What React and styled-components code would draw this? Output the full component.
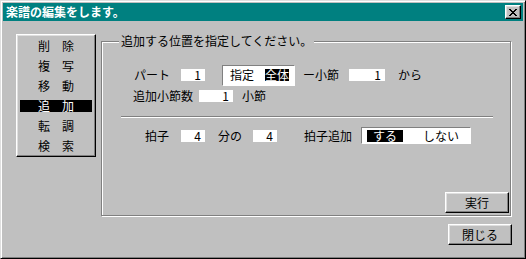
import React from "react"
import styled, { createGlobalStyle } from "styled-components"

const GlobalStyle = createGlobalStyle`
  html, body {
    margin: 0;
    padding: 0;
    background: #c0c0c0;
  }
`

const raised = `
  border: 1px solid;
  border-color: #fff #000 #000 #fff;
  box-shadow: inset -1px -1px 0 #808080, inset 1px 1px 0 #dfdfdf;
`

const StyledWindow = styled.div`
  width: 526px;
  height: 259px;
  box-sizing: border-box;
  background: #c0c0c0;
  border: 1px solid;
  border-color: #dfdfdf #000 #000 #dfdfdf;
  box-shadow: inset 1px 1px 0 #fff, inset -1px -1px 0 #808080;
  padding: 2px;
  display: flex;
  flex-direction: column;
  font-family: "Noto Sans CJK JP", "Noto Sans", sans-serif;
  font-size: 12px;
  color: #000;
`

const StyledTitleBar = styled.div`
  height: 18px;
  background: #008080;
  display: flex;
  align-items: center;
  justify-content: space-between;
  padding: 0 2px 0 3px;
  color: #fff;
  font-weight: bold;
  line-height: 12px;
`

const StyledCloseButton = styled.div`
  width: 16px;
  height: 14px;
  box-sizing: border-box;
  background: #c0c0c0;
  ${raised}
  display: flex;
  align-items: center;
  justify-content: center;
`

const StyledBody = styled.div`
  display: flex;
  align-items: flex-start;
  padding: 13px 0 0 13px;
`

const StyledList = styled.div`
  width: 80px;
  height: 123px;
  box-sizing: border-box;
  ${raised}
  padding: 1px 3px;
`

const StyledItem = styled.div`
  height: 20px;
  display: flex;
  align-items: center;
`

const StyledItemLabel = styled.span`
  display: block;
  width: 100%;
  height: 12px;
  line-height: 12px;
  text-align: center;
  background: ${(props) => (props.$active ? "#000" : "transparent")};
  color: ${(props) => (props.$active ? "#fff" : "#000")};
`

const StyledColumn = styled.div`
  display: flex;
  flex-direction: column;
  width: 411px;
  margin: 7px 0 0 5px;
`

const StyledGroup = styled.div`
  position: relative;
  width: 410px;
  height: 175px;
  box-sizing: border-box;
  border: 1px solid #808080;
  box-shadow: 1px 1px 0 #fff, inset 1px 1px 0 #fff;
  display: flex;
  flex-direction: column;
  padding-top: 22px;
`

const StyledLegend = styled.div`
  position: absolute;
  top: -7px;
  left: 17px;
  padding: 0 2px;
  background: #c0c0c0;
  line-height: 12px;
  white-space: nowrap;
`

const StyledRow = styled.div`
  display: flex;
  align-items: center;
  height: ${(props) => props.$h}px;
  padding-left: ${(props) => props.$indent}px;
  margin-top: ${(props) => props.$mt ?? 0}px;
`

const StyledLabel = styled.span`
  margin-left: ${(props) => props.$ml ?? 0}px;
  line-height: 12px;
  white-space: nowrap;
`

const StyledField = styled.span`
  width: ${(props) => props.$w}px;
  height: 12px;
  box-sizing: border-box;
  margin-left: ${(props) => props.$ml}px;
  background: #fff;
  text-align: right;
  padding-right: 4px;
  line-height: 12px;
`

const StyledSelector = styled.div`
  width: ${(props) => props.$w}px;
  height: ${(props) => props.$h}px;
  box-sizing: border-box;
  margin-left: ${(props) => props.$ml}px;
  background: #fff;
  border: 1px solid;
  border-color: #808080 #fff #fff #808080;
  display: flex;
  align-items: center;
  padding-left: ${(props) => props.$pl}px;
  gap: ${(props) => props.$gap}px;
`

const StyledOption = styled.span`
  line-height: 12px;
  padding: 0 ${(props) => props.$px}px;
  background: ${(props) => (props.$active ? "#000" : "transparent")};
  color: ${(props) => (props.$active ? "#fff" : "#000")};
`

const StyledSeparator = styled.div`
  width: 372px;
  border-top: 1px solid #808080;
  border-bottom: 1px solid #fff;
  margin: 11px 0 0 19px;
`

const StyledButton = styled.div`
  width: 64px;
  height: 21px;
  box-sizing: border-box;
  ${raised}
  background: #c0c0c0;
  display: flex;
  align-items: center;
  justify-content: center;
  line-height: 12px;
  align-self: flex-end;
  margin: ${(props) => props.$margin};
`

const CloseGlyph = () => (
  <svg width="8" height="7" viewBox="0 0 8 7" shapeRendering="crispEdges">
    <path
      d="M0 0h2v1h-2zM6 0h2v1h-2zM1 1h2v1h-2zM5 1h2v1h-2zM2 2h4v1h-4zM3 3h2v1h-2zM2 4h4v1h-4zM1 5h2v1h-2zM5 5h2v1h-2zM0 6h2v1h-2zM6 6h2v1h-2z"
      fill="#000"
    />
  </svg>
)

const commands = ["削　除", "複　写", "移　動", "追　加", "転　調", "検　索"]

const App = () => {
  return (
    <>
      <GlobalStyle />
      <StyledWindow>
        <StyledTitleBar>
          <span>楽譜の編集をします。</span>
          <StyledCloseButton>
            <CloseGlyph />
          </StyledCloseButton>
        </StyledTitleBar>

        <StyledBody>
          <StyledList>
            {commands.map((name) => (
              <StyledItem key={name}>
                <StyledItemLabel $active={name === "追　加"}>{name}</StyledItemLabel>
              </StyledItem>
            ))}
          </StyledList>

          <StyledColumn>
            <StyledGroup>
              <StyledLegend>追加する位置を指定してください。</StyledLegend>

              <StyledRow $h={22} $indent={32}>
                <StyledLabel>パート</StyledLabel>
                <StyledField $w={24} $ml={11}>1</StyledField>
                <StyledSelector $w={73} $h={21} $ml={17} $pl={7} $gap={11}>
                  <StyledOption $px={0}>指定</StyledOption>
                  <StyledOption $px={0} $active>全体</StyledOption>
                </StyledSelector>
                <StyledLabel $ml={8}>ー小節</StyledLabel>
                <StyledField $w={36} $ml={10}>1</StyledField>
                <StyledLabel $ml={13}>から</StyledLabel>
              </StyledRow>

              <StyledRow $h={19} $indent={31}>
                <StyledLabel>追加小節数</StyledLabel>
                <StyledField $w={34} $ml={6}>1</StyledField>
                <StyledLabel $ml={9}>小節</StyledLabel>
              </StyledRow>

              <StyledSeparator />

              <StyledRow $h={17} $indent={43} $mt={9}>
                <StyledLabel>拍子</StyledLabel>
                <StyledField $w={24} $ml={12}>4</StyledField>
                <StyledLabel $ml={13}>分の</StyledLabel>
                <StyledField $w={24} $ml={11}>4</StyledField>
                <StyledLabel $ml={27}>拍子追加</StyledLabel>
                <StyledSelector $w={110} $h={17} $ml={9} $pl={5} $gap={14}>
                  <StyledOption $px={6} $active>する</StyledOption>
                  <StyledOption $px={6}>しない</StyledOption>
                </StyledSelector>
              </StyledRow>

              <StyledButton $margin="auto 1px 2px 0">実行</StyledButton>
            </StyledGroup>

            <StyledButton $margin="8px 0 0 0">閉じる</StyledButton>
          </StyledColumn>
        </StyledBody>
      </StyledWindow>
    </>
  )
}

export default App
